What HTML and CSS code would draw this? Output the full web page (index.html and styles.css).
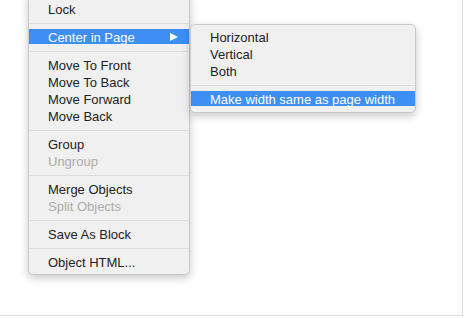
FILE: index.html
```html
<!DOCTYPE html>
<html lang="en">
<head>
  <meta charset="UTF-8">
  <title>Context Menu</title>
  <link rel="stylesheet" href="styles.css">
</head>
<body>

  <!-- Page canvas -->
  <div class="page">

    <!-- Main context menu -->
    <div class="menu main-menu">
      <div class="item">Lock</div>
      <div class="sep"></div>
      <div class="item selected has-sub">Center in Page <span class="arrow"></span></div>
      <div class="sep"></div>
      <div class="item">Move To Front</div>
      <div class="item">Move To Back</div>
      <div class="item">Move Forward</div>
      <div class="item">Move Back</div>
      <div class="sep"></div>
      <div class="item">Group</div>
      <div class="item disabled">Ungroup</div>
      <div class="sep"></div>
      <div class="item">Merge Objects</div>
      <div class="item disabled">Split Objects</div>
      <div class="sep"></div>
      <div class="item">Save As Block</div>
      <div class="sep"></div>
      <div class="item">Object HTML...</div>
    </div>

    <!-- Submenu -->
    <div class="menu sub-menu">
      <div class="item">Horizontal</div>
      <div class="item">Vertical</div>
      <div class="item">Both</div>
      <div class="sep"></div>
      <div class="item selected">Make width same as page width</div>
    </div>

  </div>

</body>
</html>
```

FILE: styles.css
```css
body {
  margin: 0;
  background: #fff;
  font-family: "Liberation Sans", Arial, sans-serif;
}

.page {
  position: relative;
  width: 462px;
  height: 315px;
  border-right: 1px solid #dedede;
  border-bottom: 1px solid #dedede;
  background: #fff;
  overflow: hidden;
}

/* Menus */
.menu {
  position: absolute;
  box-sizing: border-box;
  display: flex;
  flex-direction: column;
  background: #f0f0f0;
  border: 1px solid #c9c9c9;
  border-radius: 5px;
  box-shadow: 0 3px 9px rgba(0, 0, 0, 0.22);
  padding: 4px 0 4px;
  font-size: 13px;
  color: #222;
}

.main-menu {
  left: 28px;
  top: -8px;
  width: 162px;
  padding-top: 8px;
  padding-bottom: 3px;
}

.sub-menu {
  left: 190px;
  top: 24px;
  width: 226px;
  z-index: 2;
}

.item {
  height: 17px;
  line-height: 17px;
  padding-left: 19px;
  white-space: nowrap;
  position: relative;
  flex-shrink: 0;
}

.item.selected {
  height: 15px;
  margin-bottom: 2px;
  background: #3d8ff6;
  color: #fff;
}

.item.disabled {
  color: #ababab;
}

.arrow {
  position: absolute;
  left: 141px;
  top: 4px;
  width: 0;
  height: 0;
  border-top: 4px solid transparent;
  border-bottom: 4px solid transparent;
  border-left: 8px solid #fff;
}

.sep {
  height: 1px;
  margin: 5px 0;
  background: #dcdcdc;
  flex-shrink: 0;
}
```
